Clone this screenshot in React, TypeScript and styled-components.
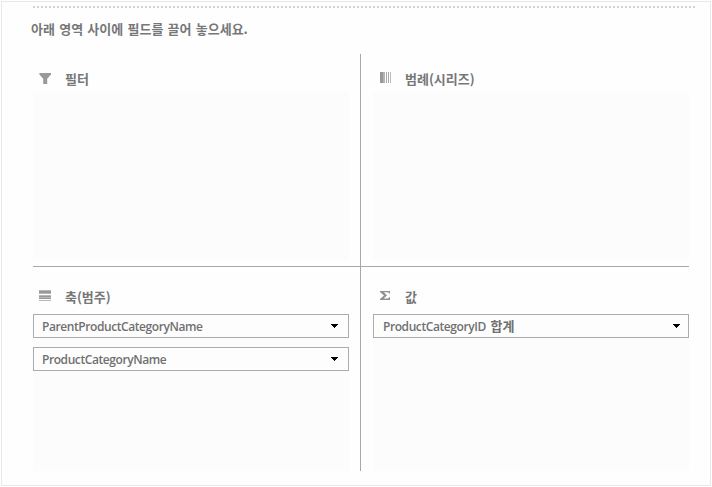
import React from "react";
import styled, { createGlobalStyle } from "styled-components";

const GlobalStyle = createGlobalStyle`
  * { box-sizing: border-box; }
  body { margin: 0; background: #fff; }
`;

const Frame = styled.main`
  width: 710px;
  height: 485px;
  margin: 1px;
  padding: 4px 15px 0 31px;
  border: 1px solid #e8e8e8;
  background: #fefefe;
  color: #777;
  font-family: "Noto Sans CJK KR", sans-serif;
  font-size: 13px;
  font-weight: 700;
`;

const DottedRule = styled.div`
  width: 662px;
  height: 2px;
  background: repeating-linear-gradient(90deg, #d2d2d2 0 2px, transparent 2px 4px);
`;

const Instruction = styled.p`
  margin: 11px 0 0 -2px;
  height: 20px;
  line-height: 20px;
  word-spacing: 1.3px;
  white-space: nowrap;
`;

const Zones = styled.div`
  display: grid;
  grid-template-columns: 327px 1px 328px;
  grid-template-rows: 212px 1px 204px;
  width: 656px;
  margin-top: 15px;
`;

const VerticalRule = styled.div`
  grid-column: 2;
  grid-row: 1 / 4;
  background: #a8a8a8;
`;

const HorizontalRule = styled.div`
  grid-column: 1 / 4;
  grid-row: 2;
  background: #a8a8a8;
`;

const Zone = styled.section<{ $column: number; $row: number }>`
  grid-column: ${(p) => p.$column};
  grid-row: ${(p) => p.$row};
  display: flex;
  flex-direction: column;
  padding: ${(p) => (p.$row === 1 ? "14px" : "19px")} ${(p) => (p.$column === 1 ? "11px" : "0")}
    ${(p) => (p.$row === 1 ? "7px" : "0")} ${(p) => (p.$column === 1 ? "0" : "12px")};
`;

const ZoneHeader = styled.header<{ $height: number }>`
  display: flex;
  align-items: flex-start;
  gap: 14px;
  height: ${(p) => p.$height}px;
  padding-left: 6px;

  svg {
    display: block;
    flex: none;
    margin-top: 4px;
  }
`;

const ZoneTitle = styled.h2`
  margin: 0;
  font: inherit;
  line-height: 21px;
`;

const DropArea = styled.div`
  flex: 1;
  display: flex;
  flex-direction: column;
  gap: 9px;
  background: #fcfcfc;
`;

const Field = styled.button<{ $indent: number; $end: number }>`
  display: flex;
  align-items: center;
  justify-content: space-between;
  height: 24px;
  padding: 0 ${(p) => p.$end}px 0 ${(p) => p.$indent}px;
  border: 1px solid #acacac;
  background: #fdfdfd;
  color: #707070;
  font-family: "Open Sans", "Noto Sans CJK KR", sans-serif;
  font-size: 12px;
  font-weight: 600;
  line-height: 22px;
  letter-spacing: -0.42px;
`;

const FieldName = styled.span`
  padding-top: 1px;
  white-space: nowrap;
`;

const Korean = styled.span`
  margin-left: 2px;
  font-family: "Noto Sans CJK KR", sans-serif;
  font-size: 13px;
  font-weight: 700;
  line-height: 1;
  letter-spacing: 0;
`;

const Caret = () => (
  <svg width="7" height="4" viewBox="0 0 7 4" shapeRendering="crispEdges">
    <path d="M0 0h7v1h-1v1h-1v1h-1v1h-1v-1h-1v-1h-1v-1h-1z" fill="#000" />
  </svg>
);

const FilterIcon = () => (
  <svg width="12" height="12" viewBox="0 0 12 12">
    <path d="M.4 1h11.600v1.500L8.200 6.800V12H4.200V6.800L.4 2.500z" fill="#999" />
  </svg>
);

const SeriesIcon = () => (
  <svg width="12" height="12" viewBox="0 0 12 12">
    <path d="M1 0h3v11H1z" fill="#999" />
    <path d="M4 0h2v11H4z" fill="#b4b4b4" />
    <path d="M7 0h1v11H7zM9 0h1v11H9z" fill="#aaa" />
    <path d="M11 0h1v11h-1z" fill="#bbb" />
  </svg>
);

const AxisIcon = () => (
  <svg width="12" height="12" viewBox="0 0 12 12">
    <path d="M0 1h12v2H0zM0 6h12v1H0zM0 8h12v1H0z" fill="#999" />
    <path d="M0 0h12v1H0zM0 3h12v1H0zM0 5h12v1H0zM0 7h12v1H0zM0 10h12v1H0z" fill="#b8b8b8" />
  </svg>
);

const SumIcon = () => (
  <svg width="12" height="12" viewBox="0 0 12 12">
    <path d="M1 1h10v2.500h-1L9.300 2.200H4.800L8 5.500 4.500 8.600h4.800L10 7.300h1V10H1V9l4-3.500L1 2z" fill="#919191" />
  </svg>
);

interface ZoneProps {
  title: string;
  icon: React.ReactNode;
  column: number;
  row: number;
  children?: React.ReactNode;
}

const FieldZone = ({ title, icon, column, row, children }: ZoneProps) => (
  <Zone $column={column} $row={row}>
    <ZoneHeader $height={row === 1 ? 25 : 28}>
      {icon}
      <ZoneTitle>{title}</ZoneTitle>
    </ZoneHeader>
    <DropArea>{children}</DropArea>
  </Zone>
);

export default function App() {
  return (
    <>
      <GlobalStyle />
      <Frame>
        <DottedRule />
        <Instruction>아래 영역 사이에 필드를 끌어 놓으세요.</Instruction>
        <Zones>
          <FieldZone title="필터" icon={<FilterIcon />} column={1} row={1} />
          <FieldZone title="범례(시리즈)" icon={<SeriesIcon />} column={3} row={1} />
          <FieldZone title="축(범주)" icon={<AxisIcon />} column={1} row={3}>
            <Field $indent={8} $end={10}>
              <FieldName>ParentProductCategoryName</FieldName>
              <Caret />
            </Field>
            <Field $indent={8} $end={10}>
              <FieldName>ProductCategoryName</FieldName>
              <Caret />
            </Field>
          </FieldZone>
          <FieldZone title="값" icon={<SumIcon />} column={3} row={3}>
            <Field $indent={9} $end={8}>
              <FieldName>
                ProductCategoryID <Korean>합계</Korean>
              </FieldName>
              <Caret />
            </Field>
          </FieldZone>
          <VerticalRule />
          <HorizontalRule />
        </Zones>
      </Frame>
    </>
  );
}
